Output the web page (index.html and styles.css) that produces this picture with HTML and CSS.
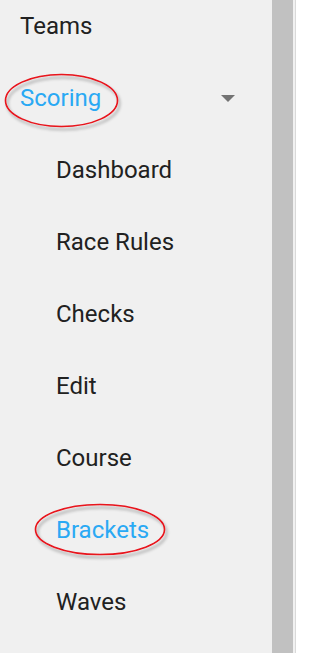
FILE: index.html
```html
<!DOCTYPE html>
<html>
<head>
<meta charset="utf-8">
<link rel="stylesheet" href="styles.css">
</head>
<body>
<div class="frame">
  <nav class="sidebar">
    <ul class="menu">
      <li class="item">Teams</li>
      <li class="item active group">
        <span>Scoring</span>
        <span class="caret"></span>
      </li>
      <li class="item sub">Dashboard</li>
      <li class="item sub">Race Rules</li>
      <li class="item sub">Checks</li>
      <li class="item sub">Edit</li>
      <li class="item sub">Course</li>
      <li class="item sub active">Brackets</li>
      <li class="item sub">Waves</li>
    </ul>
  </nav>
  <div class="scrollbar"></div>
  <div class="gap"></div>
  <div class="divider"></div>
  <div class="content"></div>
  <svg class="annotations" width="315" height="653" viewBox="0 0 315 653">
    <defs>
      <filter id="sh" x="-20%" y="-30%" width="140%" height="160%">
        <feDropShadow dx="2" dy="3" stdDeviation="1.6" flood-color="#000" flood-opacity="0.35"/>
      </filter>
    </defs>
    <ellipse cx="61.5" cy="100.5" rx="56" ry="26" fill="none" stroke="#e8121a" stroke-width="1.6" filter="url(#sh)"/>
    <ellipse cx="100" cy="529.5" rx="64.5" ry="25" fill="none" stroke="#e8121a" stroke-width="1.6" filter="url(#sh)"/>
  </svg>
</div>
</body>
</html>
```
FILE: styles.css
```css
html, body {
  margin: 0;
  padding: 0;
  background: #ffffff;
}
.frame {
  position: relative;
  display: flex;
  width: 315px;
  height: 653px;
  overflow: hidden;
  font-family: Roboto, "Liberation Sans", sans-serif;
}
.sidebar {
  width: 272px;
  flex: none;
  background: #f0f0f0;
  overflow: hidden;
}
.menu {
  list-style: none;
  margin: -10px 0 0 0;
  padding: 0;
}
.item {
  height: 72px;
  line-height: 72px;
  font-size: 24px;
  color: #212121;
  padding-left: 20px;
  white-space: nowrap;
}
.item.sub {
  padding-left: 56px;
}
.item.active {
  color: #2aa9f4;
}
.group {
  display: flex;
  align-items: center;
  padding-right: 37px;
}
.caret {
  margin-left: auto;
  width: 0;
  height: 0;
  border-left: 7px solid transparent;
  border-right: 7px solid transparent;
  border-top: 7px solid #737373;
  margin-top: 0;
}
.scrollbar {
  width: 21px;
  flex: none;
  background: #c1c1c1;
}
.gap {
  width: 2px;
  flex: none;
  background: #f1f1f1;
}
.divider {
  width: 1px;
  flex: none;
  background: #d9d9d9;
}
.content {
  flex: 1;
  background: #ffffff;
}
.annotations {
  position: absolute;
  left: 0;
  top: 0;
  pointer-events: none;
}
```
